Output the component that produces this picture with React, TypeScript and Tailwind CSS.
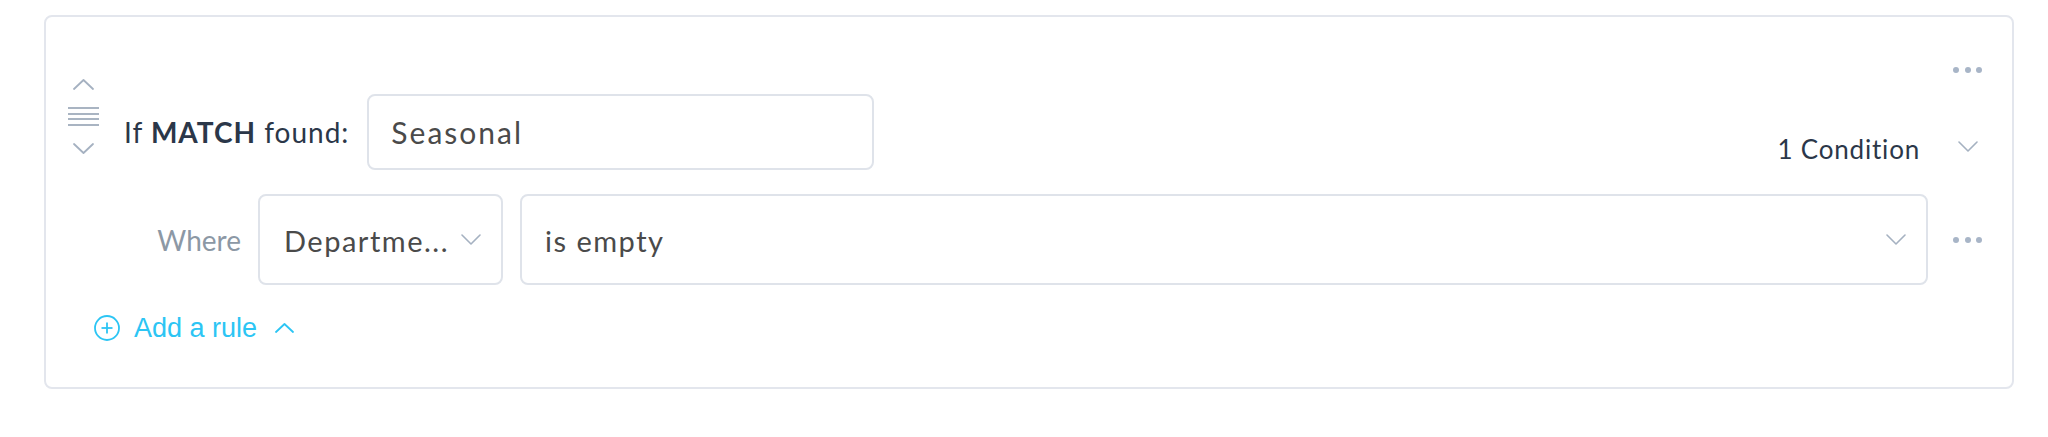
import React from "react";

function Chevron({ dir, w = 21, h = 11, sw = 1.8 }: { dir: "up" | "down"; w?: number; h?: number; sw?: number }) {
  const pts = dir === "up" ? `1,${h - 1} ${w / 2},1 ${w - 1},${h - 1}` : `1,1 ${w / 2},${h - 1} ${w - 1},1`;
  return (
    <svg width={w} height={h} viewBox={`0 0 ${w} ${h}`} className="block">
      <polyline points={pts} fill="none" stroke="currentColor" strokeWidth={sw} strokeLinecap="round" strokeLinejoin="round" />
    </svg>
  );
}

function Dots() {
  return (
    <div className="flex items-center gap-[5.5px]">
      <span className="block w-[6px] h-[6px] rounded-full bg-[#a8b5c7]" />
      <span className="block w-[6px] h-[6px] rounded-full bg-[#a8b5c7]" />
      <span className="block w-[6px] h-[6px] rounded-full bg-[#a8b5c7]" />
    </div>
  );
}

export default function App() {
  return (
    <div className="w-full h-[437px] bg-white pt-[15px] pl-[44px] pr-[34px] font-[family-name:Lato,sans-serif]">
      <div className="h-[374px] border-2 border-[#e3e6ed] rounded-[8px] pl-[22px] pr-[30px] pt-[50px]">
        {/* Row 1 */}
        <div className="flex items-start">
          <div className="mt-[12px] w-[31px] flex flex-col items-center text-[#a5b1c1]">
            <Chevron dir="up" />
            <div className="mt-[17px] w-[31px] flex flex-col gap-[3.7px]">
              <span className="block h-[2px] w-full bg-[#a9b4c2]" />
              <span className="block h-[2px] w-full bg-[#a9b4c2]" />
              <span className="block h-[2px] w-full bg-[#a9b4c2]" />
              <span className="block h-[2px] w-full bg-[#a9b4c2]" />
            </div>
            <div className="mt-[17px]">
              <Chevron dir="down" />
            </div>
          </div>
          <div className="ml-[25px] mt-[27px] flex items-center">
            <span className="text-[28px] leading-[36px] tracking-[1px] text-[#2b3749]">
              If <span className="font-bold">MATCH</span> found:
            </span>
            <div className="ml-[18px] w-[507px] h-[76px] border-2 border-[#dfe3ea] rounded-[8px] flex items-center pl-[22px]">
              <span className="text-[30px] leading-[36px] tracking-[2px] text-[#4a4a4a]">Seasonal</span>
            </div>
          </div>
          <div className="flex-1" />
          <div className="mt-[66px] text-[26px] leading-[32px] tracking-[0.8px] text-[#2b3749]">1 Condition</div>
          <div className="ml-[33px] w-[29px] flex flex-col items-center">
            <div className="h-[6px]">
              <Dots />
            </div>
            <div className="mt-[68px] text-[#a5b1c1]">
              <Chevron dir="down" w={20} h={11} sw={1.6} />
            </div>
          </div>
        </div>

        {/* Row 2 */}
        <div className="mt-[24px] h-[91px] flex items-center">
          <div className="w-[173px] text-right text-[28px] leading-[36px] text-[#8c98a5]">Where</div>
          <div className="ml-[17px] w-[245px] h-full border-2 border-[#dfe3ea] rounded-[8px] flex items-center pl-[24px] pr-[20px]">
            <span className="mt-[2px] text-[29px] leading-[36px] tracking-[1.5px] text-[#4a4a4a] whitespace-nowrap">Departme...</span>
            <div className="ml-auto text-[#a5b1c1]">
              <Chevron dir="down" w={20} h={11} sw={1.6} />
            </div>
          </div>
          <div className="ml-[17px] flex-1 h-full border-2 border-[#dfe3ea] rounded-[8px] flex items-center pl-[23px] pr-[20px]">
            <span className="mt-[2px] text-[29px] leading-[36px] tracking-[1.5px] text-[#4a4a4a]">is empty</span>
            <div className="ml-auto text-[#a5b1c1]">
              <Chevron dir="down" w={20} h={11} sw={1.6} />
            </div>
          </div>
          <div className="ml-[25px] w-[29px] flex justify-center">
            <Dots />
          </div>
        </div>

        {/* Add a rule */}
        <div className="mt-[27px] ml-[26px] h-[32px] flex items-center text-[#2cc5f4]">
          <svg width="26" height="26" viewBox="0 0 26 26" className="block">
            <circle cx="13" cy="13" r="12" fill="none" stroke="currentColor" strokeWidth="1.8" />
            <line x1="13" y1="7.5" x2="13" y2="18.5" stroke="currentColor" strokeWidth="1.8" />
            <line x1="7.5" y1="13" x2="18.5" y2="13" stroke="currentColor" strokeWidth="1.8" />
          </svg>
          <span className="ml-[14px] text-[27px] leading-[32px] font-[family-name:'Liberation_Sans',Arial,sans-serif]">Add a rule</span>
          <div className="ml-[18px]">
            <Chevron dir="up" w={19} h={10} sw={1.8} />
          </div>
        </div>
      </div>
    </div>
  );
}
